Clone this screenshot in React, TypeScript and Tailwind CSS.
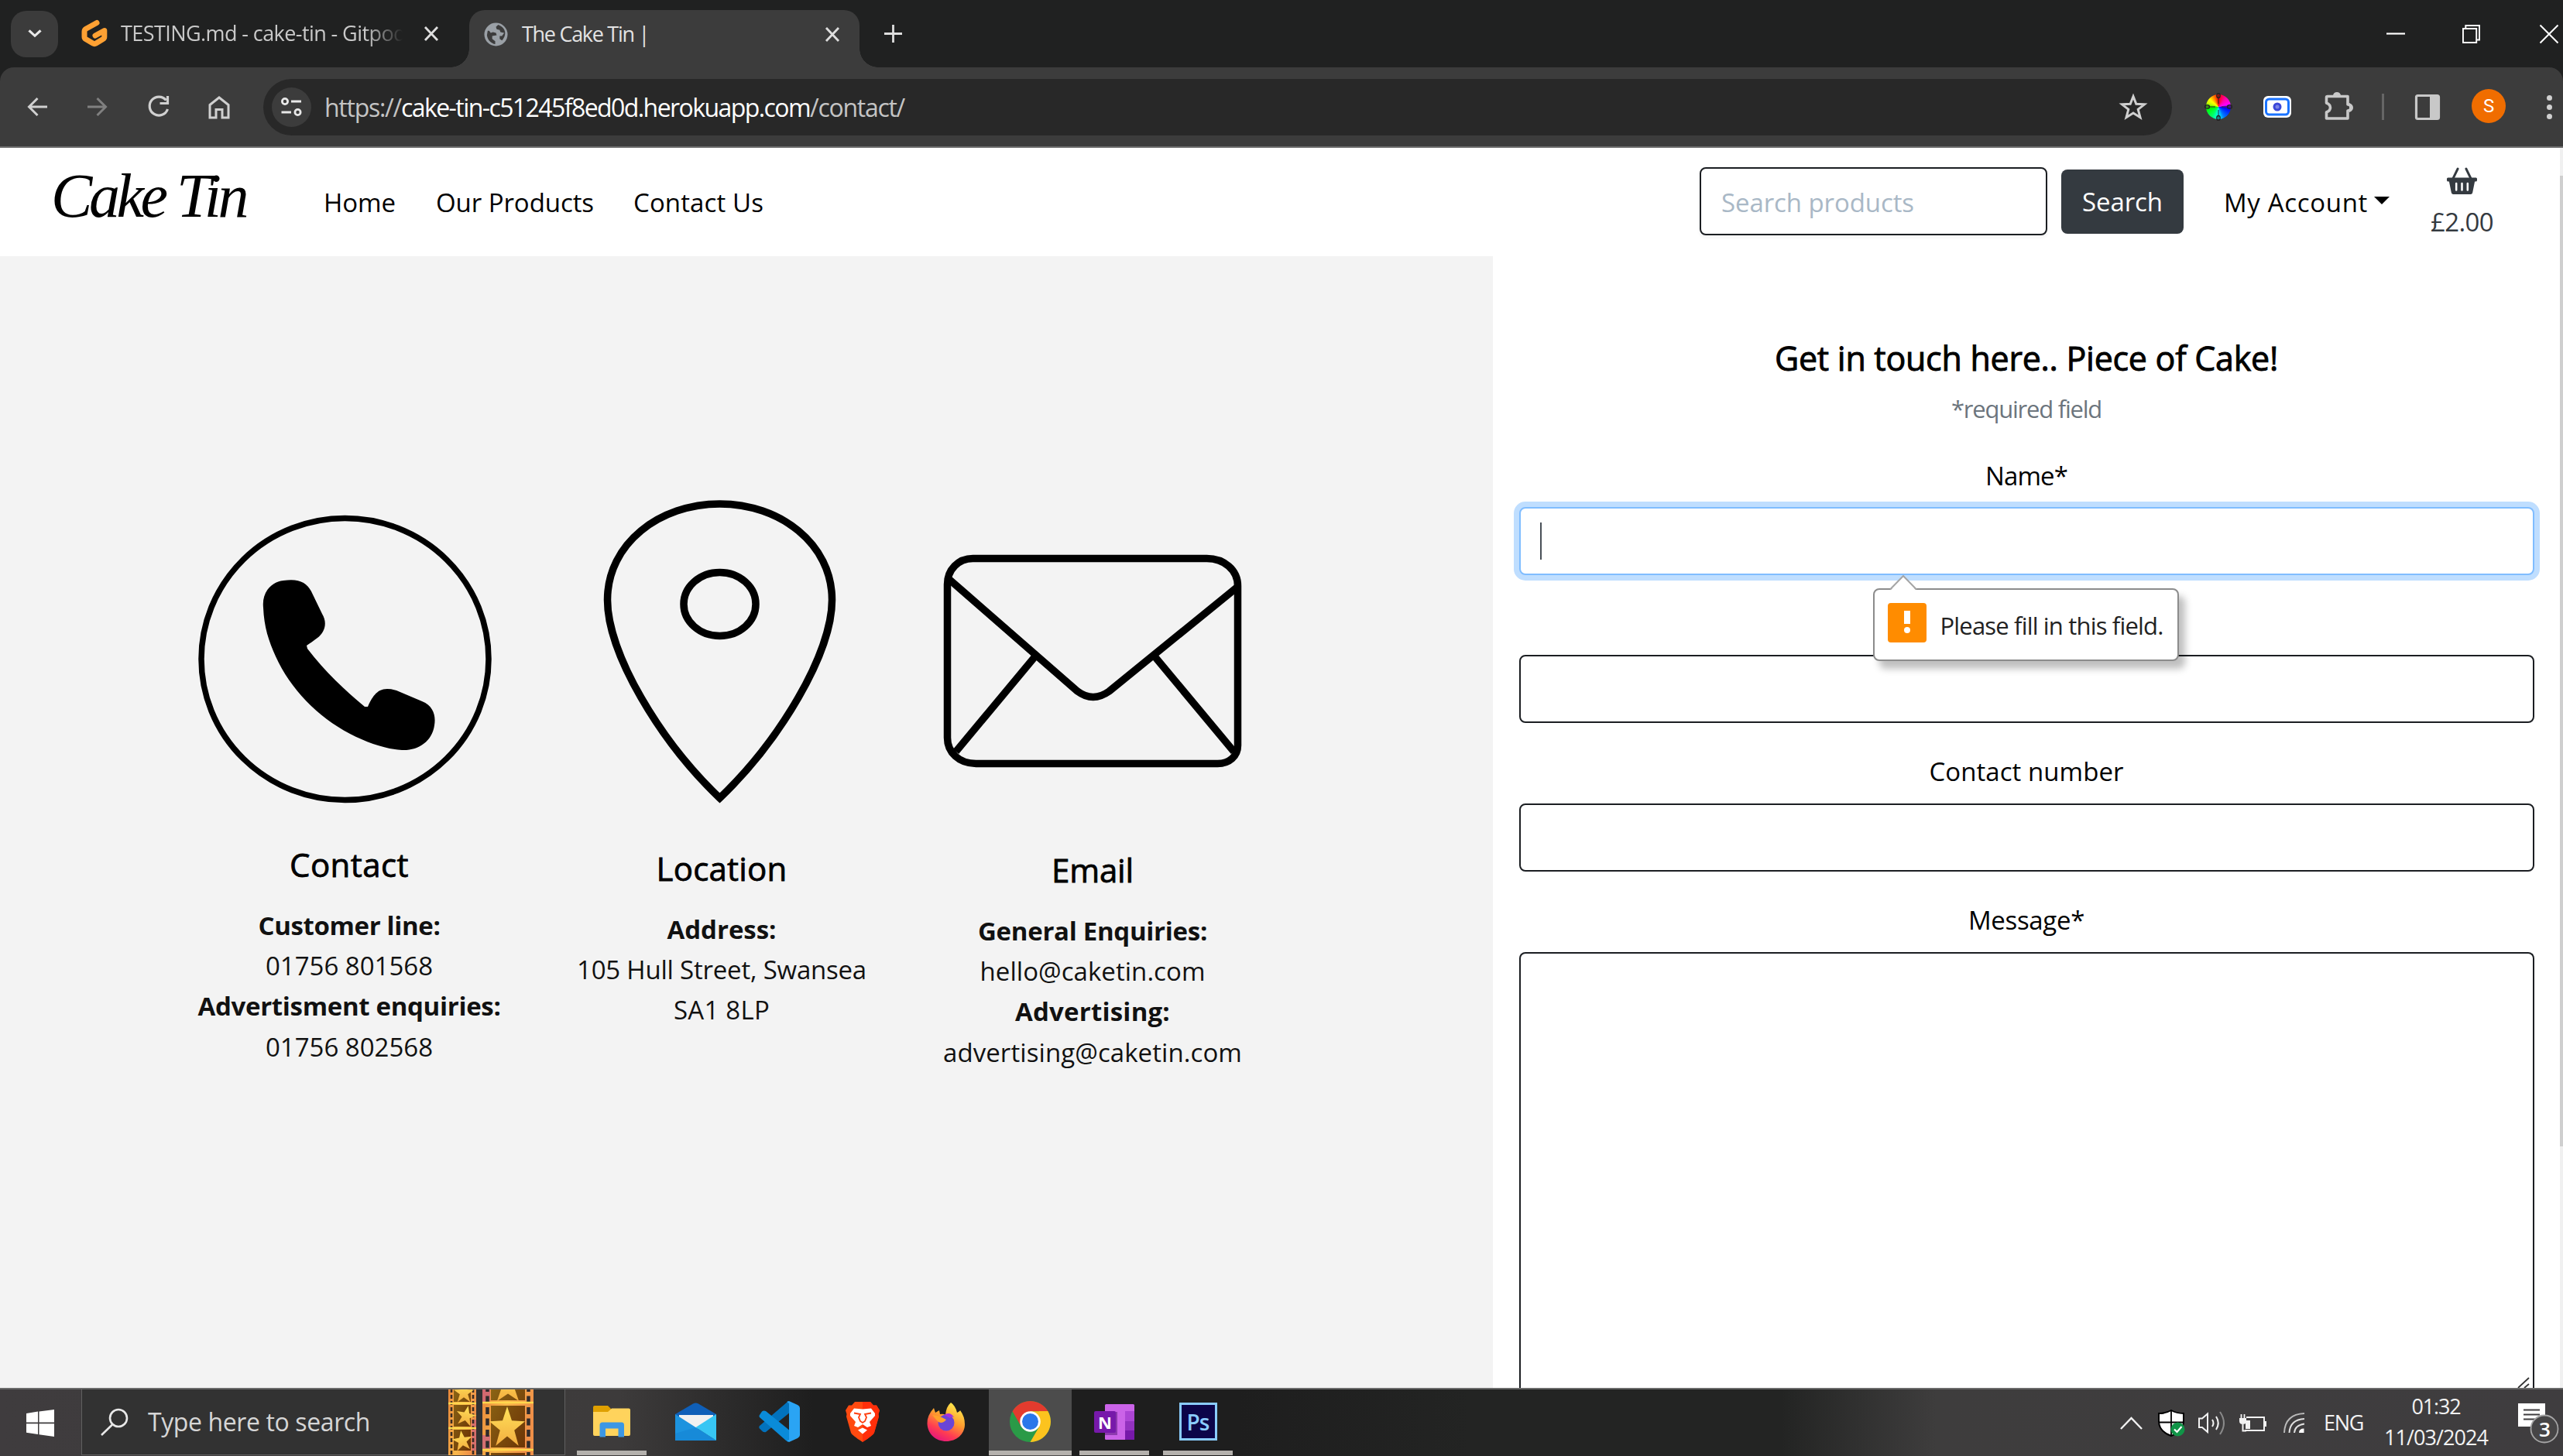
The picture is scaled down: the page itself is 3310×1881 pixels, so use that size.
import React, { useLayoutEffect, useRef } from "react";

/** Single line of text whose tracking is adjusted so that it fills the width of its box. */
function Fit({ children, className }: { children: string; className: string }) {
  const box = useRef<HTMLSpanElement>(null);
  const text = useRef<HTMLSpanElement>(null);
  useLayoutEffect(() => {
    if (!box.current || !text.current) return;
    text.current.style.letterSpacing = "0px";
    const free = box.current.clientWidth - text.current.getBoundingClientRect().width;
    text.current.style.letterSpacing = `${free / children.length}px`;
  }, [children]);
  return (
    <span ref={box} className={`block shrink-0 whitespace-nowrap ${className}`}>
      <span ref={text}>{children}</span>
    </span>
  );
}

type IconProps = { box: string; className: string; children: React.ReactNode };
function Icon({ box, className, children }: IconProps) {
  return (
    <svg viewBox={box} className={`block shrink-0 overflow-visible ${className}`} fill="none" preserveAspectRatio="none">
      {children}
    </svg>
  );
}

function Close({ className }: { className: string }) {
  return (
    <Icon box="0 0 20 17" className={`h-[17px] w-[20px] ${className}`}>
      <path d="M2 0L18 17M18 0L2 17" stroke="#dedede" strokeWidth="2.8" />
    </Icon>
  );
}

function TabBar() {
  return (
    <div className="flex h-[87px] items-center bg-[#202121]">
      <div className="ml-[14px] flex h-[60px] w-[61px] shrink-0 items-center justify-center rounded-[20px] bg-[#3b3b3b]">
        <Icon box="0 0 18 12" className="h-[11px] w-[18px]">
          <path d="M1.500 1.500L9 9L16.500 1.500" stroke="#e8e8e8" strokeWidth="3.200" />
        </Icon>
      </div>
      <Icon box="105 26 34 35" className="ml-[30px] h-[35px] w-[34px]">
        <path
          d="M125 29.500L111 37.300Q109 38.500 109 41V47.500Q109 49.500 110.700 50.500L120 56Q122 57.200 124 56L133 50.500Q134.800 49.500 134.800 47.500V39.500L123 46"
          stroke="#ffa133"
          strokeWidth="7"
          strokeLinecap="round"
          strokeLinejoin="round"
        />
      </Icon>
      <Fit className="ml-[17px] w-[368px] overflow-hidden text-[27px] text-[#c9c9c9] [mask-image:linear-gradient(to_right,#000_86%,transparent_99%)]">
        TESTING.md - cake-tin - Gitpod
      </Fit>
      <Close className="ml-[23px]" />
      <div className="relative ml-[39px] mt-[13px] flex h-[74px] w-[504px] shrink-0 items-center rounded-t-[20px] bg-[#3c3c3c] pb-[12px]">
        <div className="absolute -left-[24px] bottom-0 h-[24px] w-[24px] bg-[radial-gradient(circle_at_0_0,transparent_23.5px,#3c3c3c_24px)]" />
        <div className="absolute -right-[24px] bottom-0 h-[24px] w-[24px] bg-[radial-gradient(circle_at_100%_0,transparent_23.5px,#3c3c3c_24px)]" />
        <Icon box="0 0 32 32" className="ml-[19px] h-[31px] w-[31px]">
          <circle cx="16" cy="16" r="15.500" fill="#9aa0a6" />
          <path d="M5 11L4 17C5 24 10 28 15 29V25L11 22V18L17 17L16 14L12 13L9 14L7 11L5 11Z" fill="#3c3c3c" />
          <path d="M19 3L16 6L17 9L21 10L22 13L27 14L24 18L21 18L21 22L24 24C28 20 30 13 26 8C24 5 21 4 19 3Z" fill="#3c3c3c" />
        </Icon>
        <Fit className="ml-[18px] w-[164px] text-[27px] text-[#e3e3e3]">The Cake Tin |</Fit>
        <Close className="ml-auto mr-[25px]" />
      </div>
      <Icon box="0 0 23 23" className="ml-[32px] h-[23px] w-[23px]">
        <path d="M11.500 0V23M0 11.500H23" stroke="#dedede" strokeWidth="2.800" />
      </Icon>
      <Icon box="0 0 24 24" className="ml-auto h-[24px] w-[24px]">
        <path d="M0 11.500H24" stroke="#fff" strokeWidth="2.200" />
      </Icon>
      <Icon box="0 0 24 24" className="ml-[74px] h-[24px] w-[23px]">
        <path d="M1 5H19V23H1ZM4.500 5V1H23V19.500H19" stroke="#fff" strokeWidth="2" />
      </Icon>
      <Icon box="0 0 24 24" className="ml-[77px] mr-[6px] h-[24px] w-[24px]">
        <path d="M0.500 0.500L23.500 23.500M23.500 0.500L0.500 23.500" stroke="#fff" strokeWidth="2" />
      </Icon>
    </div>
  );
}

const wheel = "bg-[conic-gradient(#f00,#f0a_40deg,#f0f_75deg,#00f_100deg,#07f_150deg,#0ff_180deg,#0f6_215deg,#0f0_260deg,#cf0_290deg,#ff0_310deg,#f60_340deg,#f00)]";

function Toolbar() {
  return (
    <div className="bg-[#202121]">
      <div className="flex h-[104px] items-center rounded-t-[18px] border-b-2 border-[#6d6d6d] bg-[#3c3c3c]">
        <Icon box="0 0 26 24" className="ml-[35px] h-[24px] w-[26px]">
          <path d="M26 12H3M13.500 1L2.500 12L13.500 23" stroke="#d0d0d0" strokeWidth="3" />
        </Icon>
        <Icon box="0 0 26 24" className="ml-[52px] h-[24px] w-[26px]">
          <path d="M0 12H23M12.500 1L23.500 12L12.500 23" stroke="#808080" strokeWidth="3" />
        </Icon>
        <Icon box="0 0 30 30" className="ml-[51px] h-[30px] w-[30px]">
          <path d="M24.500 6.500A12 12 0 1 0 26.500 18M26.500 1V10.500H16.500" stroke="#d0d0d0" strokeWidth="3.200" />
        </Icon>
        <Icon box="0 0 28 31" className="ml-[49px] h-[31px] w-[28px]">
          <path d="M2 12.500L14 3L26 12.500V29H18V18.500H10V29H2Z" stroke="#d0d0d0" strokeWidth="3" />
        </Icon>
        <div className="ml-[43px] flex h-[73px] w-[2465px] shrink-0 items-center rounded-full bg-[#282828]">
          <div className="ml-[11px] flex h-[51px] w-[51px] shrink-0 items-center justify-center rounded-full bg-[#3c3c3c]">
            <Icon box="0 0 27 26" className="h-[26px] w-[27px]">
              <circle cx="5" cy="6" r="3.600" stroke="#e8e8e8" strokeWidth="2.800" />
              <circle cx="21.500" cy="20" r="3.600" stroke="#e8e8e8" strokeWidth="2.800" />
              <path d="M13 6H26M0.500 20H13" stroke="#e8e8e8" strokeWidth="3" />
            </Icon>
          </div>
          <div className="ml-[17px] mt-[1px] flex text-[32px] text-[#c4c4c4]">
            <Fit className="w-[99px]">https://</Fit>
            <Fit className="w-[528px] text-white">cake-tin-c51245f8ed0d.herokuapp.com</Fit>
            <Fit className="w-[122px]">/contact/</Fit>
          </div>
          <Icon box="0 0 36 34" className="ml-auto mr-[32px] h-[34px] w-[36px]">
            <path
              d="M18 3.500L21.800 13.200L32.500 13.800L24.200 20.400L27 30.700L18 25L9 30.700L11.800 20.400L3.500 13.800L14.200 13.200Z"
              stroke="#d0d0d0"
              strokeWidth="3"
            />
          </Icon>
        </div>
        <div className={`relative ml-[44px] h-[32px] w-[32px] shrink-0 rounded-full ${wheel}`}>
          <svg viewBox="0 0 36 36" className="absolute -left-[2px] -top-[2px] h-[36px] w-[36px]" fill="none">
            <path d="M18 2V34M2 18H34" stroke="#222" strokeWidth="1" strokeDasharray="12 8" />
            <ellipse cx="18" cy="3.500" rx="2.200" ry="3" stroke="#222" strokeWidth="1.400" />
            <ellipse cx="18" cy="32.500" rx="2.200" ry="3" stroke="#222" strokeWidth="1.400" />
            <ellipse cx="3.500" cy="18" rx="3" ry="2.200" stroke="#222" strokeWidth="1.400" />
            <ellipse cx="32.500" cy="18" rx="3" ry="2.200" stroke="#222" strokeWidth="1.400" />
          </svg>
        </div>
        <Icon box="0 0 36 28" className="ml-[42px] h-[28px] w-[36px]">
          <rect width="36" height="28" rx="6" fill="#fff" />
          <rect x="3.500" y="4" width="29" height="20" rx="4" stroke="#1a73ff" strokeWidth="3" />
          <circle cx="18" cy="14" r="5.500" fill="#3b46d8" />
          <circle cx="18" cy="14" r="2.500" fill="#7a84e6" />
        </Icon>
        <Icon box="3004 118 38 36" className="ml-[43px] -mt-[3px] h-[36px] w-[38px]">
          <path
            d="M3008 123.500H3034V134Q3038 134 3038 138Q3038 142 3034 142V152H3006.500V144Q3011.500 142 3011.500 138Q3011.500 134 3006.500 132V125Q3006.500 123.500 3008 123.500Z"
            stroke="#c8c8c8"
            strokeWidth="3.600"
            strokeLinejoin="round"
          />
          <path d="M3015 122Q3016 118 3020 118Q3024 118 3025 122ZM3036 132Q3041 134 3041 138Q3041 142 3036 144Z" fill="#c8c8c8" />
        </Icon>
        <div className="ml-[36px] h-[34px] w-[3px] shrink-0 bg-[#666]" />
        <Icon box="0 0 32 33" className="ml-[40px] h-[33px] w-[32px]">
          <rect x="1.500" y="1.500" width="29" height="30" rx="2" stroke="#c8c8c8" strokeWidth="3.200" />
          <rect x="19" y="2" width="12" height="29" fill="#c8c8c8" />
        </Icon>
        <div className="ml-[41px] -mt-[2px] flex h-[44px] w-[44px] shrink-0 items-center justify-center rounded-full bg-[#f06d00] font-['Roboto',sans-serif] text-[24px] text-white">
          S
        </div>
        <div className="ml-[53px] flex w-[8px] shrink-0 flex-col gap-[5px]">
          <div className="h-[7px] w-[7px] rounded-full bg-[#d0d0d0]" />
          <div className="h-[7px] w-[7px] rounded-full bg-[#d0d0d0]" />
          <div className="h-[7px] w-[7px] rounded-full bg-[#d0d0d0]" />
        </div>
      </div>
    </div>
  );
}

function SiteNav() {
  return (
    <nav className="flex h-[140px] items-center bg-white text-[33px] leading-[50px] text-black">
      <Fit className="-mt-[16px] ml-[66px] w-[251px] font-['Liberation_Serif',serif] text-[80px] italic leading-[90px]">Cake Tin</Fit>
      <Fit className="ml-[101px] mt-[1px] w-[93px]">Home</Fit>
      <Fit className="ml-[52px] mt-[1px] w-[204px]">Our Products</Fit>
      <Fit className="ml-[51px] mt-[1px] w-[168px]">Contact Us</Fit>
      <div className="-mt-[3px] ml-auto flex h-[88px] w-[449px] items-center rounded-[8px] border-2 border-[#1b1e22] bg-white pl-[26px] shadow-[0_3px_4px_rgba(0,0,0,0.05)]">
        <Fit className="mt-[5px] w-[249px] text-[#a9b8c6]">Search products</Fit>
      </div>
      <div className="-mt-[2px] ml-[18px] flex h-[83px] w-[158px] items-center justify-center rounded-[8px] bg-[#343a40]">
        <Fit className="mt-[2px] w-[104px] text-white">Search</Fit>
      </div>
      <Fit className="ml-[52px] mt-[1px] w-[186px]">My Account</Fit>
      <Icon box="0 0 20 10" className="-mt-[4px] ml-[8px] h-[10px] w-[20px]">
        <path d="M0 0H20L10 10Z" fill="#000" />
      </Icon>
      <div className="ml-[53px] mr-[86px] flex w-[81px] flex-col items-center text-[#343a40]">
        <Icon box="0 0 40 34" className="mt-[7px] h-[34px] w-[39px]">
          <path d="M14.500 1L8 14M25.500 1L32 14" stroke="#343a40" strokeWidth="3" strokeLinecap="round" />
          <path d="M1.500 12.500H38.500Q40 12.500 40 14V16Q40 17.500 38 17.500H37L34 32Q33.500 34 31.500 34H8.500Q6.500 34 6 32L3 17.500H2Q0 17.500 0 16V14Q0 12.500 1.500 12.500Z" fill="#343a40" />
          <path d="M12.500 20V28.500M20 20V28.500M27.500 20V28.500" stroke="#fff" strokeWidth="2.600" strokeLinecap="round" />
        </Icon>
        <Fit className="mt-[11px] w-[81px]">£2.00</Fit>
      </div>
    </nav>
  );
}

const heading = "text-[42px] leading-[52px] text-black [-webkit-text-stroke:0.8px_#000]";
const lines = "mt-[27px] flex flex-col items-center text-[33px] leading-[52.2px] text-[#111]";

function ContactPane() {
  return (
    <section className="flex w-[1928px] shrink-0 bg-[#f3f3f3]">
      <div className="ml-[211px] flex w-[480px] flex-col items-center">
        <Icon box="256 665 380 373" className="mr-[11px] mt-[334px] h-[373px] w-[380px]">
          <ellipse cx="445.500" cy="851.500" rx="185.500" ry="182" stroke="#000" strokeWidth="7.500" />
          <path
            d="M340 785C338 765 350 752 366 750C385 747 396 752 402 764L416 793C424 806 418 818 410 824C405 828 400 831 396 834L397 838C420 868 446 892 471 913H475C480 902 486 890 500 890Q506 890 512 892L545 906C560 912 563 925 561 937C558 958 540 970 519 969C500 968 475 960 452 948C410 926 375 890 356 848C347 828 341 810 340 785Z"
            fill="#000"
          />
        </Icon>
        <Fit className={`mt-[53px] w-[154px] ${heading}`}>Contact</Fit>
        <div className={lines}>
          <Fit className="w-[235px] font-bold">Customer line:</Fit>
          <Fit className="w-[216px]">01756 801568</Fit>
          <Fit className="w-[391px] font-bold">Advertisment enquiries:</Fit>
          <Fit className="w-[216px]">01756 802568</Fit>
        </div>
      </div>
      <div className="ml-[1px] flex w-[480px] flex-col items-center">
        <Icon box="779 646 301 392" className="mr-[5px] mt-[315px] h-[392px] w-[301px]">
          <path
            d="M929.500 651C852 651 784.500 702 784.500 775C784.500 844 852 957 929.500 1031C1007 957 1074.500 844 1074.500 775C1074.500 702 1007 651 929.500 651Z"
            stroke="#000"
            strokeWidth="9.500"
          />
          <ellipse cx="929.500" cy="780.500" rx="46.500" ry="41" stroke="#000" strokeWidth="9.500" />
        </Icon>
        <Fit className={`mt-[58px] w-[169px] ${heading}`}>Location</Fit>
        <div className={lines}>
          <Fit className="w-[141px] font-bold">Address:</Fit>
          <Fit className="w-[374px]">105 Hull Street, Swansea</Fit>
          <Fit className="w-[124px]">SA1 8LP</Fit>
        </div>
      </div>
      <div className="-ml-[1px] flex w-[480px] flex-col items-center">
        <Icon box="1217.500 716 385 275" className="mr-[2px] mt-[385px] h-[275px] w-[385px]">
          <path
            d="M1256 721.500H1558C1580 721.500 1598 736 1598 757V963C1598 977 1587 986.500 1572 986.500H1260C1238 986.500 1223 972 1223 953V755C1223 736 1237 721.500 1256 721.500Z"
            stroke="#000"
            strokeWidth="9.500"
          />
          <path d="M1226 749L1391 893Q1411 908 1432 893L1598 758M1338 846L1234 971M1489 846L1593 971" stroke="#000" strokeWidth="9.500" />
        </Icon>
        <Fit className={`mt-[107px] w-[106px] ${heading}`}>Email</Fit>
        <div className={lines}>
          <Fit className="w-[296px] font-bold">General Enquiries:</Fit>
          <Fit className="w-[291px]">hello@caketin.com</Fit>
          <Fit className="w-[200px] font-bold">Advertising:</Fit>
          <Fit className="w-[386px]">advertising@caketin.com</Fit>
        </div>
      </div>
    </section>
  );
}

const field = "w-[1311px] rounded-[8px] border-2 bg-white";

function FormPane() {
  return (
    <section className="flex w-[1378px] shrink-0 flex-col items-center overflow-hidden bg-white text-[33px] leading-[50px] text-black">
      <Fit className="mt-[104px] w-[650px] text-[43px] leading-[56px] [-webkit-text-stroke:0.9px_#000]">
        Get in touch here.. Piece of Cake!
      </Fit>
      <Fit className="mt-[17px] w-[194px] text-[31px] leading-[40px] text-[#6c757d]">*required field</Fit>
      <Fit className="mt-[42px] w-[106px]">Name*</Fit>
      <div className={`relative z-10 mt-[15px] flex h-[88px] shrink-0 items-center border-[#80bdff] pl-[25px] shadow-[0_0_0_7px_#bfdeff] ${field}`}>
        <div className="h-[48px] w-[2px] bg-[#495057]" />
        <div className="absolute left-[455px] top-[103px] flex h-[94px] w-[395px] rounded-[8px] border-2 border-[#8c8c8c] bg-white pl-[17px] shadow-[8px_10px_10px_rgba(0,0,0,0.25)]">
          <svg viewBox="0 0 35 20" className="absolute -top-[19px] left-[20px] h-[20px] w-[35px]" fill="none">
            <path d="M0 20L17 2L34 20Z" fill="#fff" />
            <path d="M0 18.500L17 1L34 18.500" stroke="#a5a5a5" strokeWidth="2" />
          </svg>
          <div className="mt-[17px] flex h-[51px] w-[50px] flex-col items-center gap-[4px] rounded-[4px] bg-[#ff8c00] pt-[10px]">
            <div className="h-[17px] w-[8px] bg-white" />
            <div className="h-[8px] w-[8px] rounded-full bg-white" />
          </div>
          <Fit className="ml-[18px] mt-[21px] w-[288px] text-[31px] text-[#222]">Please fill in this field.</Fit>
        </div>
      </div>
      <div className={`mt-[103px] h-[88px] shrink-0 border-[#1b1e22] ${field}`} />
      <Fit className="mt-[38px] w-[251px]">Contact number</Fit>
      <div className={`mt-[16px] h-[88px] shrink-0 border-[#1b1e22] ${field}`} />
      <Fit className="mt-[38px] w-[150px]">Message*</Fit>
      <div className={`mt-[16px] flex flex-1 items-end justify-end rounded-b-none border-b-0 border-[#1b1e22] ${field}`}>
        <Icon box="0 0 16 14" className="mr-[4px] h-[14px] w-[16px]">
          <path d="M1 14L15 1M9 14L15 9" stroke="#333" strokeWidth="1.800" />
        </Icon>
      </div>
    </section>
  );
}

function Slot({ children, active, open }: { children: React.ReactNode; active?: boolean; open?: boolean }) {
  return (
    <div className={`flex h-full shrink-0 flex-col ${active ? "-mx-[8px] w-[107px] bg-[#4c4c4c]" : "w-[90px]"}`}>
      <div className="flex flex-1 items-center justify-center pt-[4px]">{children}</div>
      <div className={`mb-[1px] h-[6px] ${open ? "bg-[#b4b1ad]" : ""}`} />
    </div>
  );
}

const star = "M0 -1L0.260 -0.300L1 -0.260L0.400 0.180L0.640 0.950L0 0.480L-0.640 0.950L-0.400 0.180L-1 -0.260L-0.260 -0.300Z";

function Films() {
  return (
    <Icon box="580 1795 111 86" className="ml-[101px] h-[86px] w-[111px]">
      <defs>
        <linearGradient id="strip" x1="0" y1="0" x2="1" y2="0.300">
          <stop offset="0" stopColor="#e8863a" />
          <stop offset="0.500" stopColor="#f9b84a" />
          <stop offset="1" stopColor="#ee8f48" />
        </linearGradient>
        <linearGradient id="gold" x1="0" y1="0" x2="0" y2="1">
          <stop offset="0" stopColor="#ffe25a" />
          <stop offset="1" stopColor="#f3ad3f" />
        </linearGradient>
        <linearGradient id="cell" x1="0" y1="0" x2="1" y2="1">
          <stop offset="0" stopColor="#8a6414" />
          <stop offset="1" stopColor="#6b3205" />
        </linearGradient>
        <clipPath id="filmclip">
          <rect x="580" y="1793" width="111" height="88" />
        </clipPath>
      </defs>
      <g clipPath="url(#filmclip)">
        <rect x="580" y="1793" width="36" height="88" fill="url(#strip)" />
        <rect x="624" y="1793" width="66" height="88" fill="url(#strip)" />
        <rect x="624" y="1795" width="10" height="18" fill="#c75a86" opacity="0.700" />
        <rect x="624" y="1855" width="10" height="18" fill="#c75a86" opacity="0.700" />
        <rect x="610" y="1835" width="6" height="40" fill="#c75a86" opacity="0.600" />
        <path d="M584 1795V1881M612 1795V1881" stroke="#3a2c24" strokeWidth="2.600" strokeDasharray="5 3" />
        <path d="M630.500 1790V1881M683.500 1790V1881" stroke="#2f2b2c" strokeWidth="4.500" strokeDasharray="9 5.500" />
        <path d="M587 1795h22v17h-22zM587 1816h22v28h-22zM587 1848h22v27h-22z" fill="url(#cell)" />
        <path d="M635 1795h44v15h-44zM635 1817h44v54h-44zM635 1878h44v3h-44z" fill="url(#cell)" />
        <path d="M580 1814H616M580 1846H616M624 1813H690M624 1874H690" stroke="#ffd84d" strokeWidth="2.500" />
        <path d={star} transform="translate(600 1800) scale(13 13)" fill="url(#gold)" />
        <path d={star} transform="translate(603 1830) rotate(12) scale(13 13)" fill="url(#gold)" />
        <path d={star} transform="translate(598 1862) rotate(-8) scale(13 13)" fill="url(#gold)" />
        <path d={star} transform="translate(657 1792) scale(22 20)" fill="url(#gold)" />
        <path d={star} transform="translate(656 1844) scale(23 26)" fill="url(#gold)" />
      </g>
    </Icon>
  );
}

function Taskbar() {
  return (
    <footer className="flex h-[88px] items-center overflow-hidden border-t-2 border-[#6a6a6a] bg-[linear-gradient(to_right,#3f3c3e_0,#3d3b3b_800px,#1e1e1e_1050px,#1e1e1e_1600px,#232423_1900px,#232423_2300px,#3e3d3d_2500px,#3f3d3f_100%)]">
      <Icon box="0 0 36 35" className="ml-[34px] h-[35px] w-[36px]">
        <path d="M0 5L15 2.600V16.500H0ZM16.500 2.400L36 0V16.500H16.500ZM0 18.200H15V32L0 29.800ZM16.500 18.200H36V35L16.500 32.300Z" fill="#fff" />
      </Icon>
      <div className="mb-[1px] ml-[35px] flex h-[85px] w-[625px] shrink-0 items-center border border-t-0 border-[#606060] bg-[#323232]">
        <Icon box="130 1819 36 36" className="ml-[24px] h-[36px] w-[36px]">
          <circle cx="153" cy="1832" r="11" stroke="#e8e8e8" strokeWidth="2.600" />
          <path d="M145 1840.500L131 1854" stroke="#e8e8e8" strokeWidth="2.600" />
        </Icon>
        <Fit className="ml-[25px] w-[287px] text-[32px] text-[#d6d6d6]">Type here to search</Fit>
        <Films />
      </div>
      <div className="ml-[15px] flex h-full gap-[18px]">
        <Slot open>
          <Icon box="0 0 48 41" className="h-[41px] w-[48px]">
            <path d="M0 2Q0 0 2 0H19L23 4V12H0Z" fill="#dfa000" />
            <path d="M0 8H19L24 3.500H46Q48 3.500 48 5.500V37Q48 39 46 39H2Q0 39 0 37Z" fill="#ffd35c" />
            <path d="M8.500 40.500V25Q8.500 21.500 12 21.500H37Q40 21.500 40 25V40.500H32.500V29.500H16V40.500Z" fill="#3c97e4" />
          </Icon>
        </Slot>
        <Slot>
          <Icon box="0 0 53 50" className="h-[50px] w-[53px]">
            <path d="M0 15L23 1.500Q26.500 -0.500 30 1.500L53 15V24H0Z" fill="#0f5fb8" />
            <path d="M5 16H49V30L27 34L5 30Z" fill="#f1f1f1" />
            <path d="M0 15L53 49H0Z" fill="#1c93df" />
            <path d="M53 15V49L26.500 32Z" fill="#37c6f4" />
            <path d="M26.500 32L53 49H0L0 40Z" fill="#178ad8" />
          </Icon>
        </Slot>
        <Slot>
          <Icon box="0 0 53 53" className="h-[53px] w-[53px]">
            <path d="M38 0L41 14L9 40Q6 41 3.500 38L0.500 35Q0 33 1 32L37 1Z" fill="#0272bd" />
            <path d="M1 18L4 13.500Q6 12 9 13L41 39L38 53L35 51L1 21Q0 19.500 1 18Z" fill="#0a8bd9" />
            <path d="M36 1L39 0L50 5Q53 6.500 53 9V44Q53 46.500 50 48L39 53L36 51Q39 51 39 48V5Q39 2 36 1Z" fill="#2aa4f4" />
          </Icon>
        </Slot>
        <Slot>
          <Icon box="0 0 44 52" className="h-[52px] w-[44px]">
            <path d="M12 0H32L36 4.500L40 4.500L44 11L42.500 16L43 19L37 40Q36 43 22 52Q8 43 7 40L1 19L1.500 16L0 11L4 4.500L8 4.500Z" fill="#ff4a10" />
            <path d="M22 0H32L36 4.500L40 4.500L44 11L42.500 16L43 19L37 40Q36 43 22 52Z" fill="#ff2408" opacity="0.700" />
            <path d="M6 15L11 8.500L22 9.500L33 8.500L38 15L38 18L31 26L33 31L28 33L22 29L16 33L11 31L13 26L6 18Z" fill="#fff" />
            <path d="M22 33.500L28 36.500L22 41.500L16 36.500Z" fill="#fff" />
            <path d="M11 14.500L19 16L17 20L19 25L22 27L25 25L27 20L25 16L33 14.500" stroke="#ff3c0c" strokeWidth="1.800" />
          </Icon>
        </Slot>
        <Slot>
          <Icon box="0 0 50 50" className="h-[50px] w-[50px]">
            <defs>
              <linearGradient id="fox" x1="0.800" y1="0" x2="0.300" y2="1">
                <stop offset="0" stopColor="#fff44f" />
                <stop offset="0.450" stopColor="#ff9a2e" />
                <stop offset="0.750" stopColor="#ff3c52" />
                <stop offset="1" stopColor="#e3157f" />
              </linearGradient>
            </defs>
            <path d="M31 0Q37 4 39 13Q43 11 43 10Q49 18 49 28C49 41 38 50 25 50C12 50 1 41 0.500 27Q0 17 9 7L11 13L16 10L17 15Q21 14 24 16Q25 5 31 0Z" fill="url(#fox)" />
            <circle cx="25" cy="26" r="10.500" fill="#6a45d6" />
            <path d="M22 16Q30 11 35 19Q31 17 30 20Z" fill="#a32fe0" />
            <path d="M7 16Q15 16 25 22Q22 26 18 26Q14 25 12 22Z" fill="#ffa22b" />
          </Icon>
        </Slot>
        <Slot active open>
          <Icon box="0 0 52 52" className="h-[53px] w-[53px]">
            <circle cx="26" cy="26" r="26" fill="#2a9a47" />
            <path d="M3.500 13A26 26 0 0 1 48.500 13H26L14.700 32.500Z" fill="#e33b2e" />
            <path d="M48.500 13A26 26 0 0 1 26 52L37.300 32.500L37 13Z" fill="#fcc31e" />
            <path d="M26 13H48.500L37.300 32.500Z" fill="#fcc31e" />
            <circle cx="26" cy="26" r="13" fill="#fff" />
            <circle cx="26" cy="26" r="10.300" fill="#2a77ea" />
          </Icon>
        </Slot>
        <Slot open>
          <div className="relative h-[46px] w-[52px]">
            <Icon box="0 0 52 46" className="h-[46px] w-[52px]">
              <rect x="14" width="38" height="46" rx="1.500" fill="#cb63e8" />
              <rect x="40" y="9" width="12" height="13" fill="#ac45d4" />
              <rect x="40" y="22" width="12" height="12" fill="#9332bf" />
              <rect x="40" y="34" width="12" height="12" fill="#7719aa" />
              <rect x="14" y="10" width="16" height="30" fill="#8d3aae" />
              <rect y="9" width="28" height="28" rx="2" fill="#7719aa" />
            </Icon>
            <span className="absolute left-0 top-[9px] w-[28px] text-center text-[22px] font-bold leading-[28px] text-white">N</span>
          </div>
        </Slot>
        <Slot open>
          <div className="flex h-[49px] w-[49px] items-center justify-center border-[3px] border-[#8accff] bg-[#0c0549] text-[28px] font-semibold tracking-[-1px] text-[#8accff]">
            Ps
          </div>
        </Slot>
      </div>
      <Icon box="0 0 30 18" className="ml-auto h-[17px] w-[29px]">
        <path d="M1 17L15 2L29 17" stroke="#f2f2f2" strokeWidth="2.400" />
      </Icon>
      <Icon box="2788 1819 34 35" className="ml-[20px] h-[35px] w-[34px]">
        <path d="M2805 1820Q2812 1824 2821 1824V1834Q2821 1847 2805 1853Q2789 1847 2789 1834V1824Q2798 1824 2805 1820Z" fill="#fff" stroke="#000" strokeWidth="2" />
        <path d="M2805 1820V1852M2789 1835.500H2821" stroke="#000" strokeWidth="1.800" />
        <circle cx="2813.500" cy="1844.500" r="9" fill="#109447" />
        <path d="M2809 1844.500L2812.500 1848L2818.500 1841" stroke="#fff" strokeWidth="2.200" />
      </Icon>
      <Icon box="2840 1820 35 32" className="ml-[18px] h-[32px] w-[35px]">
        <path d="M2841 1830.500H2845L2852 1824.500V1848L2845 1842H2841Z" stroke="#f2f2f2" strokeWidth="2" />
        <path d="M2858 1832Q2861 1836.500 2858 1841M2863 1828Q2868.500 1836.500 2863 1845" stroke="#f2f2f2" strokeWidth="2" />
        <path d="M2868 1822Q2878 1836.500 2868 1851" stroke="#8a8a8a" strokeWidth="2" />
      </Icon>
      <Icon box="2893 1824 35 25" className="ml-[18px] h-[25px] w-[35px]">
        <path d="M2902 1829H2925V1846H2900M2927 1834V1841M2897.500 1838V1846.500H2902" stroke="#f2f2f2" strokeWidth="2" />
        <path d="M2893 1830H2902V1834Q2902 1838 2897.500 1838Q2893 1838 2893 1834Z" fill="#f2f2f2" />
        <path d="M2895.500 1825V1830M2899.500 1825V1830" stroke="#f2f2f2" strokeWidth="1.800" />
        <rect x="2901" y="1833" width="6" height="11" fill="#f2f2f2" />
      </Icon>
      <Icon box="2950 1824 27 27" className="ml-[22px] h-[27px] w-[27px]">
        <path d="M2951 1850Q2952 1826 2977 1825" stroke="#b9b9b9" strokeWidth="2" />
        <path d="M2957.500 1850Q2958.500 1833 2977 1832M2964 1850Q2965 1840 2977 1838.500" stroke="#e0e0e0" strokeWidth="2" />
        <path d="M2970 1850Q2970 1844.500 2976.500 1844.500V1850Z" fill="#fff" />
      </Icon>
      <Fit className="ml-[25px] w-[51px] text-[27px] text-[#f2f2f2]">ENG</Fit>
      <div className="-mt-[3px] ml-[27px] flex w-[134px] shrink-0 flex-col items-center text-[27px] leading-[40px] text-[#f2f2f2]">
        <Fit className="w-[63px]">01:32</Fit>
        <Fit className="w-[134px]">11/03/2024</Fit>
      </div>
      <div className="relative ml-[39px] mr-[5px] h-[52px] w-[53px] shrink-0">
        <Icon box="0 0 53 52" className="h-[52px] w-[53px]">
          <path d="M0 0H35V30H22L16 36V30H0Z" fill="#fff" transform="translate(0 1)" />
          <path d="M7 9.500H28M7 15.500H28M7 21.500H22" stroke="#3f3d3f" strokeWidth="2" />
          <circle cx="34" cy="34" r="17.500" fill="#464546" stroke="#a5a5a5" strokeWidth="1.800" />
        </Icon>
        <span className="absolute left-[17px] top-[17px] w-[35px] text-center text-[26px] font-semibold leading-[35px] text-white">3</span>
      </div>
    </footer>
  );
}

export default function App() {
  return (
    <div className="flex h-[1881px] w-[3310px] flex-col overflow-hidden bg-white font-['Open_Sans','Noto_Sans',sans-serif]">
      <TabBar />
      <Toolbar />
      <div className="flex">
        <div className="w-[3306px] shrink-0">
          <SiteNav />
          <div className="flex h-[1462px]">
            <ContactPane />
            <FormPane />
          </div>
        </div>
        <div className="w-[4px] shrink-0 bg-[#f0f0f0] pt-[36px]">
          <div className="h-[1254px] bg-[#cfcfcf]" />
        </div>
      </div>
      <Taskbar />
    </div>
  );
}
